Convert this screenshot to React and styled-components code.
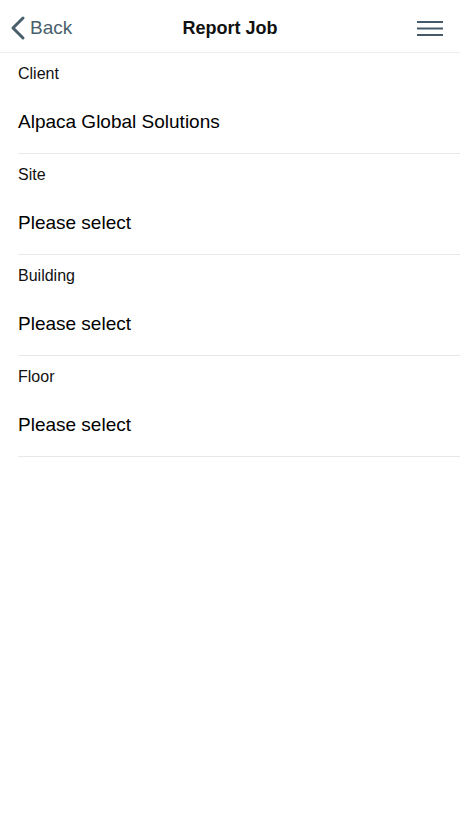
import styled, { createGlobalStyle } from 'styled-components';

const GlobalStyle = createGlobalStyle`
  html, body {
    margin: 0;
    padding: 0;
    background: #fff;
    font-family: 'Liberation Sans', Arial, sans-serif;
    color: #000;
  }
`;

const fields = [
  { label: 'Client', value: 'Alpaca Global Solutions' },
  { label: 'Site', value: 'Please select' },
  { label: 'Building', value: 'Please select' },
  { label: 'Floor', value: 'Please select' },
];

const App = () => {
  return (
    <>
      <GlobalStyle />
      <Page>
        <Header>
          <BackButton>
            <svg width='16' height='26' viewBox='0 0 16 26'>
              <polyline
                points='13,3 3,13 13,23'
                fill='none'
                stroke='#4a5f6c'
                strokeWidth='3'
                strokeLinecap='round'
                strokeLinejoin='round'
              />
            </svg>
            <span>Back</span>
          </BackButton>
          <Title>Report Job</Title>
          <MenuButton>
            <svg width='26' height='16' viewBox='0 0 26 16'>
              <g stroke='#44596a' strokeWidth='2'>
                <line x1='0' y1='2' x2='26' y2='2' />
                <line x1='0' y1='8.5' x2='26' y2='8.5' />
                <line x1='0' y1='15' x2='26' y2='15' />
              </g>
            </svg>
          </MenuButton>
        </Header>
        <Form>
          {fields.map((f) => (
            <Field key={f.label}>
              <Label>{f.label}</Label>
              <Value>{f.value}</Value>
            </Field>
          ))}
        </Form>
      </Page>
    </>
  );
};

const Page = styled.div`
  width: 100%;
  min-height: 818px;
  background: #fff;
`;

const Header = styled.div`
  box-sizing: border-box;
  height: 53px;
  padding-top: 4px;
  border-bottom: 1px solid #ececec;
  display: grid;
  grid-template-columns: 1fr auto 1fr;
  align-items: center;
`;

const BackButton = styled.div`
  display: flex;
  align-items: center;
  gap: 4px;
  padding-left: 10px;
  color: #4a5f6c;
  font-size: 19px;
  svg {
    display: block;
  }
`;

const Title = styled.div`
  font-size: 18px;
  font-weight: bold;
  color: #111;
`;

const MenuButton = styled.div`
  display: flex;
  justify-content: flex-end;
  padding-right: 17px;
  svg {
    display: block;
  }
`;

const Form = styled.div`
  display: flex;
  flex-direction: column;
`;

const Field = styled.div`
  margin-left: 18px;
  padding: 12px 0 19px;
  border-bottom: 1px solid #e8e8e8;
  display: flex;
  flex-direction: column;
`;

const Label = styled.div`
  font-size: 16px;
  line-height: 18px;
  color: #111;
`;

const Value = styled.div`
  margin-top: 27px;
  font-size: 19px;
  line-height: 24px;
  color: #000;
`;

export default App;
